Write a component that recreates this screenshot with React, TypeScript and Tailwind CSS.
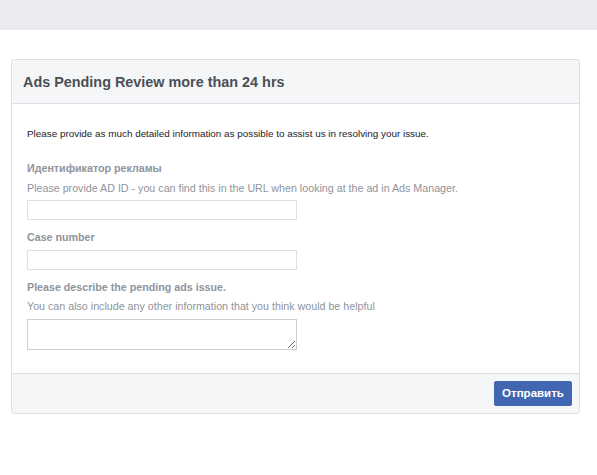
export default function App() {
  return (
    <div className="min-h-[475px] bg-white" style={{ fontFamily: '"Liberation Sans", Arial, Helvetica, sans-serif' }}>
      <div className="h-[30px] bg-[#e9ebee]" />
      <div className="ml-[11px] mt-[29px] w-[569px] rounded-[3px] border border-[#dddfe2] bg-white">
        <div className="flex h-[44px] items-center border-b border-[#dddfe2] bg-[#f5f6f7] pl-[11px] rounded-t-[3px]">
          <h2 className="text-[14.4px] font-bold leading-[18px] text-[#4b4f56]">Ads Pending Review more than 24 hrs</h2>
        </div>
        <div className="px-[15px] pt-[22px] pb-[23px]">
          <p className="text-[9.9px] leading-[16px] text-[#1d2129]">
            Please provide as much detailed information as possible to assist us in resolving your issue.
          </p>
          <div className="mt-[18px] text-[10.7px] font-bold leading-[16px] text-[#90949c]">Идентификатор рекламы</div>
          <div className="mt-[4px] text-[10.7px] leading-[16px] text-[#90949c]">
            Please provide AD ID - you can find this in the URL when looking at the ad in Ads Manager.
          </div>
          <input type="text" className="mt-[4px] block h-[20px] w-[270px] border border-[#dddfe2] bg-white outline-none" />
          <div className="mt-[9px] text-[10.7px] font-bold leading-[16px] text-[#90949c]">Case number</div>
          <input type="text" className="mt-[5px] block h-[20px] w-[270px] border border-[#dddfe2] bg-white outline-none" />
          <div className="mt-[9px] text-[10.7px] font-bold leading-[16px] text-[#90949c]">Please describe the pending ads issue.</div>
          <div className="mt-[3px] text-[10.7px] leading-[16px] text-[#90949c]">
            You can also include any other information that you think would be helpful
          </div>
          <textarea className="mt-[5px] block h-[31px] w-[270px] border border-[#ccd0d5] bg-white outline-none" />
        </div>
        <div className="flex justify-end border-t border-[#dddfe2] bg-[#f5f6f7] pt-[7px] pb-[7px] pr-[7px] rounded-b-[3px]">
          <button className="h-[25px] w-[78px] rounded-[2px] border border-[#4267b2] bg-[#4267b2] text-[11.5px] font-bold text-white">
            Отправить
          </button>
        </div>
      </div>
    </div>
  );
}
